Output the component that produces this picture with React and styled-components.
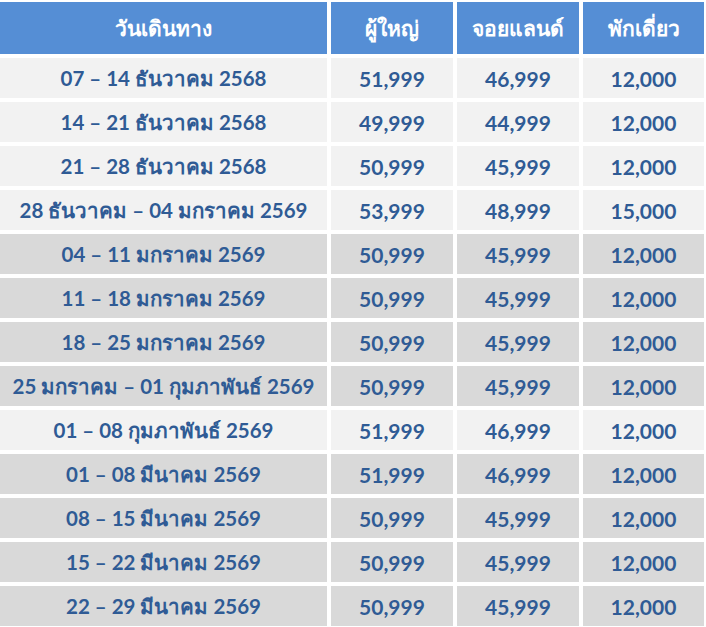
import React from 'react'
import styled, { createGlobalStyle } from 'styled-components'

const GlobalStyle = createGlobalStyle`
  html, body {
    margin: 0;
    padding: 0;
    background: #ffffff;
  }
  body {
    font-family: Lato, "Noto Sans", "Open Sans", sans-serif;
  }
`

const Table = styled.div`
  display: grid;
  grid-template-columns: 327px 122px 122px 121px;
  grid-template-rows: 52px;
  grid-auto-rows: 40px;
  gap: 4px;
  padding-top: 2px;
  width: 704px;
`

// each row only groups its cells, the grid does the layout
const Row = styled.div`
  display: contents;
`

const Cell = styled.div`
  display: flex;
  align-items: center;
  justify-content: center;
  font-size: ${p => (p.$date ? '20.5px' : '21px')};
  font-weight: 700;
  white-space: nowrap;
  color: ${p => (p.$head ? '#ffffff' : '#2f5b95')};
  background: ${p => (p.$head ? '#558ed5' : p.$dark ? '#d9d9d9' : '#f2f2f2')};
`

const headers = ['วันเดินทาง', 'ผู้ใหญ่', 'จอยแลนด์', 'พักเดี่ยว']

const rows = [
  ['07 – 14 ธันวาคม 2568', '51,999', '46,999', '12,000', false],
  ['14 – 21 ธันวาคม 2568', '49,999', '44,999', '12,000', false],
  ['21 – 28 ธันวาคม 2568', '50,999', '45,999', '12,000', false],
  ['28 ธันวาคม – 04 มกราคม 2569', '53,999', '48,999', '15,000', false],
  ['04 – 11 มกราคม 2569', '50,999', '45,999', '12,000', true],
  ['11 – 18 มกราคม 2569', '50,999', '45,999', '12,000', true],
  ['18 – 25 มกราคม 2569', '50,999', '45,999', '12,000', true],
  ['25 มกราคม – 01 กุมภาพันธ์ 2569', '50,999', '45,999', '12,000', true],
  ['01 – 08 กุมภาพันธ์ 2569', '51,999', '46,999', '12,000', false],
  ['01 – 08 มีนาคม 2569', '51,999', '46,999', '12,000', true],
  ['08 – 15 มีนาคม 2569', '50,999', '45,999', '12,000', true],
  ['15 – 22 มีนาคม 2569', '50,999', '45,999', '12,000', true],
  ['22 – 29 มีนาคม 2569', '50,999', '45,999', '12,000', true],
]

const App = () => {
  return (
    <>
      <GlobalStyle />
      <Table>
        <Row>
          {headers.map(h => (
            <Cell $head key={h}>{h}</Cell>
          ))}
        </Row>
        {rows.map(([date, adult, joy, single, dark], i) => (
          <Row key={i}>
            <Cell $dark={dark} $date>{date}</Cell>
            <Cell $dark={dark}>{adult}</Cell>
            <Cell $dark={dark}>{joy}</Cell>
            <Cell $dark={dark}>{single}</Cell>
          </Row>
        ))}
      </Table>
    </>
  )
}

export default App
